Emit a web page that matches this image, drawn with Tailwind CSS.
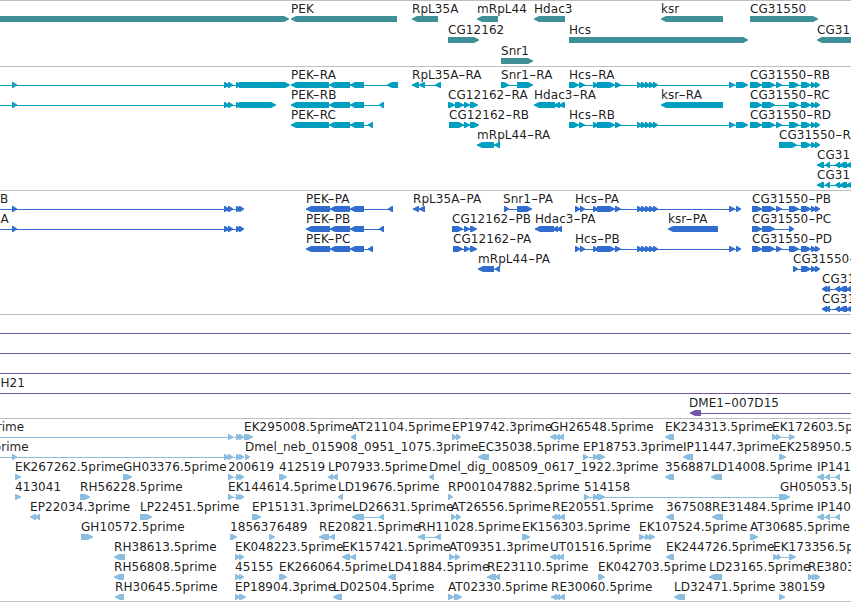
<!DOCTYPE html>
<html lang="en">
<head>
  <meta charset="UTF-8" />
  <meta name="viewport" content="width=device-width, initial-scale=1" />
  <title>Genome Browser</title>
  <script src="https://cdn.jsdelivr.net/npm/@tailwindcss/browser@4"></script>
</head>
<body class="bg-white overflow-hidden">

  <main class="w-[851px] h-[602px] flex flex-col overflow-hidden border-b border-[#bfbfbf] font-['DejaVu_Sans',sans-serif] text-[12px] tracking-[0.06px]">
    <!-- Genes -->
    <section class="h-[66px] shrink-0 border-t border-[#bfbfbf] text-[#3f8f96]">
      <svg id="genes" class="block w-full h-full" aria-label="Genes"></svg>
    </section>
    <!-- Transcripts -->
    <section class="h-[124px] shrink-0 border-t border-[#bfbfbf] text-[#009ebf]">
      <svg id="transcripts" class="block w-full h-full" aria-label="Transcripts"></svg>
    </section>
    <!-- Proteins -->
    <section class="h-[124px] shrink-0 border-t border-[#bfbfbf] text-[#306dce]">
      <svg id="proteins" class="block w-full h-full" aria-label="Proteins"></svg>
    </section>
    <!-- BACs -->
    <section class="h-[104px] shrink-0 border-t border-[#bfbfbf] text-[#7355a5]">
      <svg id="bacs" class="block w-full h-full" aria-label="BACs"></svg>
    </section>
    <!-- ESTs -->
    <section class="h-[183px] shrink-0 border-t border-[#bfbfbf] text-[#8abddf]">
      <svg id="ests" class="block w-full h-full" aria-label="ESTs"></svg>
    </section>
  </main>

  <script>
    // One feature per line: row | label x | label | strand | exons
    const tracks = {
      genes: { step: 21, data: `
        0|0||>|-20-289
        0|291|PEK|<|291-397
        0|412|RpL35A|<|412-438
        0|477|mRpL44|<|477-498
        0|534|Hdac3|<|534-565
        0|661|ksr|<|661-723
        0|750|CG31550|>|750-818
        1|448|CG12162|>|448-479
        1|569|Hcs|>|569-748
        1|817|CG31551|<|817-900
        2|501|Snr1|>|501-533` },
      transcripts: { step: 20, data: `
        0|0||>|-20--10,12-17,224-229,228-233,236-241,239-290
        1|0||>|-20--10,12-17,224-229,228-233,236-241,239-276
        0|291|PEK-RA|<|291-329,329-350,350-364,387-398
        1|291|PEK-RB|<|291-329,329-350,350-364,379-384
        2|291|PEK-RC|<|291-329,329-350,350-364,368-373
        0|412|RpL35A-RA|<|412-419,419-425,435-441
        0|501|Snr1-RA|>|501-509,517-533
        1|448|CG12162-RA|>|448-455,455-464,464-470,470-478
        2|449|CG12162-RB|>|449-464,464-470,470-479
        3|477|mRpL44-RA|<|477-494,494-500
        1|534|Hdac3-RA|<|534-555,554-560,559-565
        0|569|Hcs-RA|>|569-579,579-585,593-598,597-615,615-621,637-642,641-646,645-650,649-654,653-658,729-735,736-748
        2|569|Hcs-RB|>|569-579,579-585,593-598,597-615,615-621,637-642,641-646,645-650,649-654,653-658,729-735,736-748
        1|661|ksr-RA|<|661-723
        0|750|CG31550-RB|>|750-762,762-775,776-782,789-799,801-811,811-816,815-820
        1|750|CG31550-RC|>|750-762,762-775,789-799,801-811,811-816,815-820
        2|750|CG31550-RD|>|750-762,762-775,776-782,789-799,801-811,811-816,815-820
        3|779|CG31550-RA|>|779-797,801-811,811-816,815-820
        4|817|CG31551-RA|<|817-824,825-830,835-840,839-847,846-856
        5|817|CG31551-RB|<|817-824,825-830,835-840,839-847,846-856` },
      proteins: { step: 20, data: `
        0|0|B|>|-20--10,12-17,224-229,228-233,236-241,239-244
        1|0.5|A|>|-20--10,12-17,224-229,228-233,236-241,239-244
        0|306|PEK-PA|<|306-330,330-350,350-364,388-393
        1|306|PEK-PB|<|306-330,330-350,350-364,379-384
        2|306|PEK-PC|<|306-330,330-350,350-364,368-373
        0|413|RpL35A-PA|<|413-419,419-425
        0|503|Snr1-PA|>|504-509,517-532
        1|452|CG12162-PB|>|452-463,464-470,470-477
        2|453|CG12162-PA|>|453-463,464-470,470-477
        3|478|mRpL44-PA|<|478-494,495-500
        1|535|Hdac3-PA|<|535-554,553-558,557-562
        0|575|Hcs-PA|>|575-580,580-585,593-598,597-615,615-621,637-642,641-646,645-650,649-654,653-658,729-735,736-741
        2|575|Hcs-PB|>|575-580,580-585,593-598,597-615,615-621,637-642,641-646,645-650,649-654,653-658,729-735,736-741
        1|668|ksr-PA|<|668-718
        0|752|CG31550-PB|>|752-762,762-775,776-782,789-799,801-811,811-816,815-820
        1|752|CG31550-PC|>|752-762,762-775,789-794
        2|752|CG31550-PD|>|752-762,762-775,776-782,789-799,801-811,811-816,815-820
        3|793|CG31550-PA|>|793-798,801-811,811-816,815-820
        4|822|CG31551-PA|<|822-827,825-830,835-840,839-847,846-856
        5|822|CG31551-PB|<|822-827,825-830,835-840,839-847,846-856` },
      bacs: { step: 20, data: `
        0|0||>|-20--10,860-870
        1|0||>|-20--10,860-870
        2|0||>|-20--10,860-870
        3|0.5|H21|>|-20--10,860-870
        4|689|DME1-007D15|<|690-701,860-870` },
      ests: { step: 20, data: `
        0|-11|prime|>|-20--10,228-233,236-241,239-244
        0|244|EK295008.5prime|>|244-253
        0|351|AT21104.5prime|<|351-356
        0|452|EP19742.3prime|>|452-457,456-461
        0|550|GH26548.5prime|<|550-556,555-560,559-564
        0|665|EK234313.5prime|<|665-674
        0|772|EK172603.5prime|>|772-777,776-781,789-795
        1|-6.5|prime|>|-20--10,12-17,224-229,228-233,236-241,239-244
        1|245|Dmel_neb_015908_0951_1075.3prime|>|245-250
        1|478|EC35038.5prime|<|478-489
        1|583|EP18753.3prime|>|583-588,593-598,597-605
        1|683|IP11447.3prime|<|683-693
        1|779|EK258950.5prime|>|779-786
        2|15|EK267262.5prime|>|15-21
        2|123|GH03376.5prime|>|123-132
        2|228|200619|>|228-233,236-241,239-244
        2|279|412519|>|279-287
        2|328|LP07933.5prime|<|328-333,332-338
        2|429|Dmel_dig_008509_0617_1922.3prime|<|429-434
        2|665|356887|<|665-674
        2|711|LD14008.5prime|<|711-722
        2|817|IP14111.5prime|<|817-824,825-830,835-840
        3|15|413041|>|15-21
        3|80|RH56228.5prime|>|80-90
        3|228|EK144614.5prime|>|228-233,236-241,239-244
        3|338|LD19676.5prime|<|338-343
        3|448|RP001047882.5prime|>|448-453
        3|584|514158|>|584-589,593-598,597-605,779-786
        3|780|GH05053.5prime|>|780-790
        4|30|EP22034.3prime|<|30-36,35-40
        4|140|LP22451.5prime|>|140-152
        4|252|EP15131.3prime|>|252-261
        4|352|LD26631.5prime|<|352-364,379-384
        4|451|AT26556.5prime|>|451-456,456-461
        4|552|RE20551.5prime|<|552-557,556-560,559-565
        4|666|367508|<|666-674
        4|712|RE31484.5prime|<|712-723
        4|817|IP14011.5prime|<|817-824,825-830,835-840
        5|81|GH10572.5prime|>|81-93
        5|230|18563|>|230-237
        5|269|76489|>|269-275
        5|319|RE20821.5prime|<|319-329,329-335
        5|418|RH11028.5prime|<|418-425,435-441
        5|522|EK156303.5prime|>|522-530
        5|639|EK107524.5prime|>|639-645,645-650,649-655
        5|750|AT30685.5prime|>|750-758
        6|114|RH38613.5prime|<|114-125
        6|235|EK048223.5prime|>|235-240,239-244
        6|342|EK157421.5prime|<|342-350,350-356
        6|449|AT09351.3prime|>|449-455,455-460
        6|550|UT01516.5prime|<|550-556,555-560,559-564
        6|666|EK244726.5prime|<|666-674
        6|773|EK173356.5prime|>|773-778,777-781,789-796
        7|114|RH56808.5prime|<|114-124
        7|235|45155|>|235-240,239-244
        7|279|EK266064.5prime|>|279-287
        7|388|LD41884.5prime|<|388-396
        7|487|RE23110.5prime|<|487-496,495-500
        7|598|EK042703.5prime|>|598-605
        7|709|LD23165.5prime|<|709-722
        7|808|RE38031.5prime|>|808-813,812-817,815-820
        8|115|RH30645.5prime|<|115-124
        8|235|EP18904.3prime|>|235-240,239-246
        8|333|LD02504.5prime|<|333-342
        8|448|AT02330.5prime|>|448-454,454-462
        8|551|RE30060.5prime|<|551-557,556-560,559-565
        8|674|LD32471.5prime|<|674-685
        8|779|380159|>|779-785` },
    };

    // Block with an arrow head on the strand side
    function exonPath(start, end, y, strand) {
      const head = Math.min(5, end - start - 1);
      return strand === ">"
        ? `M${start} ${y}H${end - head}L${end} ${y + 2.5}V${y + 3.5}L${end - head} ${y + 6}H${start}Z`
        : `M${end} ${y}H${start + head}L${start} ${y + 2.5}V${y + 3.5}L${start + head} ${y + 6}H${end}Z`;
    }

    for (const [id, track] of Object.entries(tracks)) {
      let out = "";
      track.data.trim().split("\n").forEach(line => {
        const [row, x, label, strand, exonText] = line.trim().split("|");
        const y = 15 + row * track.step;
        const exons = exonText.split(",").map(e => e.match(/^(-?\d+)-(-?\d+)$/).slice(1).map(Number));
        const first = exons[0][0];
        const last = exons[exons.length - 1][1];
        if (exons.length > 1) {
          out += `<rect x="${first}" y="${y + 3}" width="${last - first - 3}" height="1" fill="currentColor" />`;
        }
        out += `<path d="${exons.map(e => exonPath(e[0], e[1], y, strand)).join("")}" fill="currentColor" />`;
        // the hyphen is drawn wide, like a short dash
        const text = label.replace("-", `<tspan textLength="7.2" lengthAdjust="spacingAndGlyphs">-</tspan>`);
        if (label) out += `<text x="${x}" y="${y - 3}" class="fill-black/90">${text}</text>`;
      });
      document.getElementById(id).innerHTML = out;
    }
  </script>

</body>
</html>
